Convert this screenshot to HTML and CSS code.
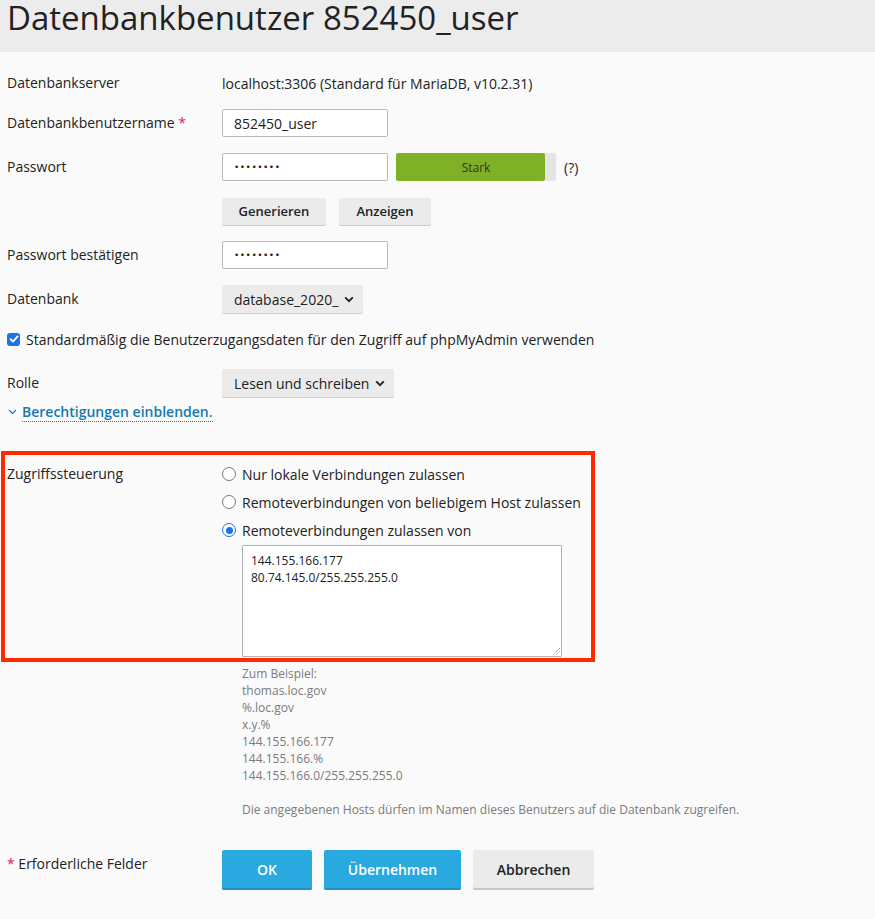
FILE: index.html
```html
<!DOCTYPE html>
<html lang="de">
<head>
<meta charset="utf-8">
<title>Datenbankbenutzer 852450_user</title>
<link rel="stylesheet" href="styles.css">
</head>
<body>
<header class="page-header">
  <h1 class="page-title">Datenbankbenutzer 852450_user</h1>
</header>
<form class="form">
  <div class="row row-server">
    <div class="label">Datenbankserver</div>
    <div class="field">localhost:3306 (Standard für MariaDB, v10.2.31)</div>
  </div>
  <div class="row row-user">
    <div class="label">Datenbankbenutzername <span class="req">*</span></div>
    <div class="field"><input class="input" type="text" value="852450_user"></div>
  </div>
  <div class="row row-gap">
    <div class="label">Passwort</div>
    <div class="field">
      <input class="input input-pass" type="password" value="12345678">
      <div class="strength"><div class="strength-fill"></div><span class="strength-text">Stark</span></div>
      <span class="help">(?)</span>
    </div>
  </div>
  <div class="row row-gap">
    <div class="label"></div>
    <div class="field">
      <button type="button" class="btn btn-gray btn-small">Generieren</button>
      <button type="button" class="btn btn-gray btn-small btn-show">Anzeigen</button>
    </div>
  </div>
  <div class="row row-gap">
    <div class="label">Passwort bestätigen</div>
    <div class="field"><input class="input input-pass" type="password" value="12345678"></div>
  </div>
  <div class="row row-gap">
    <div class="label">Datenbank</div>
    <div class="field">
      <div class="select select-db"><span class="select-text">database_2020_</span>
        <svg class="chev" width="10" height="7" viewBox="0 0 10 7"><path d="M1.2 1.4 L5 5.2 L8.8 1.4" fill="none" stroke="#222" stroke-width="1.9"/></svg>
      </div>
    </div>
  </div>
  <div class="check-row">
    <span class="checkbox"><svg width="12" height="12" viewBox="0 0 12 12"><path d="M2.6 6.2 L5 8.6 L9.6 3.4" fill="none" stroke="#fff" stroke-width="1.9" stroke-linecap="round" stroke-linejoin="round"/></svg></span>
    <span>Standardmäßig die Benutzerzugangsdaten für den Zugriff auf phpMyAdmin verwenden</span>
  </div>
  <div class="row row-role">
    <div class="label">Rolle</div>
    <div class="field">
      <div class="select select-role"><span class="select-text">Lesen und schreiben</span>
        <svg class="chev" width="10" height="7" viewBox="0 0 10 7"><path d="M1.2 1.4 L5 5.2 L8.8 1.4" fill="none" stroke="#222" stroke-width="1.9"/></svg>
      </div>
    </div>
  </div>
  <div class="toggle-row">
    <svg class="toggle-chev" width="9" height="6" viewBox="0 0 9 6"><path d="M1 1 L4.5 4.5 L8 1" fill="none" stroke="#1579b0" stroke-width="1.1"/></svg>
    <a class="toggle-link">Berechtigungen einblenden.</a>
  </div>
  <div class="access-box">
    <div class="row row-access">
      <div class="label">Zugriffssteuerung</div>
      <div class="field field-col">
        <label class="radio-row"><span class="radio"></span>Nur lokale Verbindungen zulassen</label>
        <label class="radio-row"><span class="radio"></span>Remoteverbindungen von beliebigem Host zulassen</label>
        <label class="radio-row"><span class="radio radio-on"></span>Remoteverbindungen zulassen von</label>
        <div class="textarea-wrap">
          <div class="textarea">144.155.166.177<br>80.74.145.0/255.255.255.0</div>
          <svg class="grip" width="8" height="8" viewBox="0 0 8 8"><path d="M7.5 1.5 L1.5 7.5 M7.5 4.5 L4.5 7.5" stroke="#555" stroke-width="0.9" stroke-dasharray="1 1"/></svg>
        </div>
      </div>
    </div>
  </div>
  <div class="hint">
    <p>Zum Beispiel:<br>thomas.loc.gov<br>%.loc.gov<br>x.y.%<br>144.155.166.177<br>144.155.166.%<br>144.155.166.0/255.255.255.0</p>
    <p>Die angegebenen Hosts dürfen im Namen dieses Benutzers auf die Datenbank zugreifen.</p>
  </div>
  <div class="row row-footer">
    <div class="label"><span class="req">*</span> Erforderliche Felder</div>
    <div class="field">
      <button type="button" class="btn btn-blue btn-ok">OK</button>
      <button type="button" class="btn btn-blue btn-apply">Übernehmen</button>
      <button type="button" class="btn btn-gray btn-cancel">Abbrechen</button>
    </div>
  </div>
</form>
</body>
</html>
```

FILE: styles.css
```css
html, body {
  margin: 0;
  padding: 0;
  background: #fafafa;
}
body {
  font-family: "Open Sans", "Liberation Sans", sans-serif;
  font-size: 14px;
  color: #222;
}
.page-header {
  background: #ececec;
  height: 52px;
  padding-left: 7px;
}
.page-title {
  margin: 0;
  font-size: 33px;
  font-weight: 400;
  line-height: 36px;
  color: #222;
  white-space: nowrap;
}
.form {
  padding: 0 7px;
}
.row {
  display: grid;
  grid-template-columns: 215px 1fr;
  align-items: center;
  min-height: 28px;
}
.label {
  line-height: 20px;
}
.field {
  display: flex;
  align-items: center;
}
.row-server { margin-top: 17px; }
.row-user { margin-top: 12px; }
.row-gap { margin-top: 16px; }
.req { color: #d7254d; }
.input {
  box-sizing: border-box;
  width: 166px;
  height: 28px;
  border: 1px solid #b9b9b9;
  border-radius: 2px;
  background: #fff;
  padding: 0 11px;
  font-family: "Open Sans", "Liberation Sans", sans-serif;
  font-size: 14px;
  color: #222;
  margin: 0;
}
.input-pass {
  font-family: "DejaVu Sans", sans-serif;
  font-size: 9px;
  letter-spacing: 0.5px;
}
.strength {
  position: relative;
  width: 160px;
  height: 28px;
  margin-left: 8px;
  background: #e5e5e5;
  border-radius: 2px;
  display: flex;
  align-items: center;
  justify-content: center;
}
.strength-fill {
  position: absolute;
  left: 0;
  top: 0;
  bottom: 0;
  width: 149px;
  background: #80b025;
  border-radius: 2px;
}
.strength-text {
  position: relative;
  font-size: 12px;
  color: #333;
}
.help {
  margin-left: 8px;
  font-size: 14px;
}
.btn {
  font-family: "Open Sans", "Liberation Sans", sans-serif;
  border: 0;
  border-radius: 2px;
  margin: 0;
  cursor: pointer;
}
.btn-gray {
  background: #ebebeb;
  color: #222;
  box-shadow: 0 1px 0 #c9c9c9;
}
.btn-small {
  height: 27px;
  font-size: 13px;
  font-weight: 600;
  padding: 0;
  width: 104px;
}
.btn-show {
  width: 92px;
  margin-left: 13px;
}
.select {
  box-sizing: border-box;
  height: 28px;
  background: #ebebeb;
  border-radius: 2px;
  box-shadow: 0 1px 0 #cfcfcf;
  display: flex;
  align-items: center;
  padding-left: 12px;
  padding-right: 9px;
  font-size: 14px;
  color: #222;
  white-space: nowrap;
  overflow: hidden;
}
.select-text {
  flex: 1;
  overflow: hidden;
}
.select-db { width: 141px; }
.select-role { width: 172px; }
.chev { flex: none; margin-left: 4px; }
.check-row {
  display: flex;
  align-items: center;
  margin-top: 15px;
  height: 22px;
}
.checkbox {
  box-sizing: border-box;
  width: 13px;
  height: 13px;
  border-radius: 3px;
  background: #1a73e8;
  display: flex;
  align-items: center;
  justify-content: center;
  margin-right: 6px;
  flex: none;
}
.row-role { margin-top: 19px; }
.toggle-row {
  display: flex;
  align-items: center;
  margin-top: 4px;
  height: 22px;
}
.toggle-chev {
  margin-left: 1px;
  margin-right: 5px;
}
.toggle-link {
  color: #1579b0;
  font-weight: 600;
  border-bottom: 1px dotted #1579b0;
  line-height: 19px;
  cursor: pointer;
}
.access-box {
  margin: 28px 0 0 -6px;
  width: 584px;
  border: 4px solid #ff2a00;
  padding: 8px 0 0 2px;
  height: 195px;
}
.row-access {
  align-items: start;
}
.row-access .label { line-height: 22px; }
.field-col {
  flex-direction: column;
  align-items: flex-start;
}
.radio-row {
  display: flex;
  align-items: center;
  height: 22px;
  margin-bottom: 6px;
}
.radio {
  box-sizing: border-box;
  width: 14px;
  height: 14px;
  border-radius: 50%;
  border: 1px solid #767676;
  background: #fff;
  margin-right: 6px;
  flex: none;
  display: flex;
  align-items: center;
  justify-content: center;
}
.radio-on {
  border: 1.5px solid #1a73e8;
}
.radio-on::after {
  content: "";
  width: 7px;
  height: 7px;
  border-radius: 50%;
  background: #1a73e8;
}
.textarea-wrap {
  position: relative;
  margin-left: 20px;
  margin-top: -2px;
}
.textarea {
  box-sizing: border-box;
  width: 320px;
  height: 112px;
  background: #fff;
  border: 1px solid #b3b3b3;
  border-radius: 1px;
  padding: 6px 8px;
  font-size: 12px;
  line-height: 17px;
  color: #222;
}
.grip {
  position: absolute;
  right: 2px;
  bottom: 2px;
}
.hint {
  margin-left: 235px;
  margin-top: 3px;
  font-size: 12px;
  line-height: 17px;
  color: #7a7a7a;
}
.hint p {
  margin: 0 0 17px 0;
}
.row-footer {
  margin-top: 32px;
  align-items: start;
}
.row-footer .label {
  line-height: 28px;
}
.btn-blue {
  background: #29a9df;
  color: #fff;
  box-shadow: 0 -2px 0 #2391c4 inset;
}
.btn-ok, .btn-apply, .btn-cancel {
  height: 40px;
  font-size: 14px;
  font-weight: 600;
  padding: 0 0 2px 0;
}
.btn-ok { width: 90px; }
.btn-apply { width: 137px; margin-left: 12px; }
.btn-cancel {
  width: 121px;
  margin-left: 12px;
  box-shadow: 0 -2px 0 #c7c7c7 inset;
}
```
